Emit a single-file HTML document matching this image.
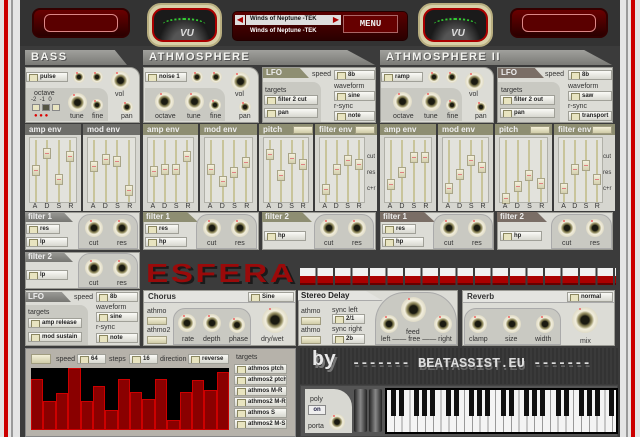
<!DOCTYPE html>
<html><head><meta charset="utf-8"><style>
*{margin:0;padding:0;box-sizing:border-box}
body{width:640px;height:437px;overflow:hidden;background:#3b3b3b;font-family:"Liberation Sans",sans-serif;font-size:7px;color:#333;position:relative}
.a{position:absolute}
.pan{position:absolute;background:#dcdcd6;border:1px solid #9a9a94}
.sub{position:absolute;background:#c9c9c2;border-radius:0 10px 0 0}
.hd{position:absolute;height:15px;background:linear-gradient(#a0a09c,#7a7a76);clip-path:polygon(0 0,88% 0,100% 100%,0 100%);color:#f4f4f0;font:bold 11px "Liberation Sans",sans-serif;letter-spacing:1.5px;padding:1px 6px;text-shadow:1px 1px 0 #555}
.k{position:absolute;border-radius:50%;background:radial-gradient(circle,#1a1a10 0 22%,#6a6440 30%,#9a9468 38%,#f2eedc 50%,#d8d4c0 78%,#9a9688 100%)}
.k::after{content:"";position:absolute;width:2px;height:2px;border-radius:50%;background:#e66;top:1px;left:28%}
.b{position:absolute;height:10px;background:linear-gradient(#fafaf6,#d8d8d0);border:1px solid #a0a098;font-weight:bold;font-size:6px;padding-left:13px;line-height:8px;color:#222;white-space:nowrap;overflow:hidden}
.b::before{content:"";position:absolute;left:2px;top:1px;width:7px;height:6px;background:#e8e4c0;border:1px solid #8a8660}
.l{position:absolute;font-size:7px;color:#333;white-space:nowrap}
.env{position:absolute;background:#d6d6d0;height:87px}
.eh{height:11px;background:#6e6e6a;color:#eee;font-size:8px;font-weight:bold;padding-left:4px;line-height:11px}
.o .eh{background:#8e8e72}
.eb{position:absolute;left:4px;right:4px;top:13px;height:66px;background:#e2e2dc;border:1px solid #b0b0a8;display:flex;justify-content:space-around}
.tr{width:2px;height:62px;margin-top:2px;background:#c8c49a;position:relative}
.tr i{position:absolute;left:-3px;width:8px;height:11px;background:linear-gradient(#f4f0dc,#d4d0b0);border:1px solid #a8a488}
.tr i::after{content:"";position:absolute;left:1px;right:1px;top:4px;height:1px;background:#e08080}
.ad{position:absolute;left:4px;right:4px;top:79px;display:flex;justify-content:space-around;font-size:7px;color:#333}
.fh{position:absolute;height:10px;background:linear-gradient(#9a9a96,#767672);clip-path:polygon(0 0,80% 0,100% 100%,0 100%);color:#eee;font-size:8px;font-weight:bold;padding-left:3px;line-height:10px}
.o.fh,.fh.o{background:#8e8e72}
.kp{position:absolute;background:#c9c9c2;border-radius:12px 12px 0 0;border:1px solid #aaa}
.tg{position:absolute;width:20px;height:8px;background:linear-gradient(#f4f0d8,#d0cca8);border:1px solid #a09c80}
.vu{position:absolute;border-radius:14px;background:#d8d0a8;border:2px solid #b8ae80;padding:3px}
.vu div{width:100%;height:100%;border-radius:11px;background:radial-gradient(ellipse at 50% 120%,#555 0 30%,#1a1a1a 60%);border:2px solid #a00;position:relative}
.red{position:absolute;background:linear-gradient(#6a0000,#2a0000);border-radius:8px;border:2px solid #300}
</style></head><body>
<div class="a" style="left:0;top:0;width:20px;height:437px;background:#e4e4e4"></div>
<div class="a" style="left:4px;top:0;width:4px;height:437px;background:#c00"></div>
<div class="a" style="left:11px;top:0;width:2px;height:437px;background:#999"></div>
<div class="a" style="left:620px;top:0;width:20px;height:437px;background:#e4e4e4"></div>
<div class="a" style="left:631px;top:0;width:4px;height:437px;background:#c00"></div>
<div class="a" style="left:626px;top:0;width:2px;height:437px;background:#999"></div>
<div class="a" style="left:20px;top:0;width:600px;height:46px;background:#333"></div>

<div class="red" style="left:32px;top:8px;width:98px;height:30px"><div class="a" style="left:10px;top:4px;width:74px;height:18px;border:1px solid #d88;border-radius:6px;background:#5a0000"></div></div>
<div class="red" style="left:510px;top:8px;width:98px;height:30px"><div class="a" style="left:10px;top:4px;width:74px;height:18px;border:1px solid #d88;border-radius:6px;background:#5a0000"></div></div>
<div class="vu" style="left:147px;top:3px;width:75px;height:44px"><div><span class="a" style="left:26px;top:18px;color:#ddd;font:italic bold 10px sans-serif">VU</span><span class="a" style="left:8px;top:8px;width:44px;height:14px;border-top:2px dotted #3c3;border-radius:50% 50% 0 0"></span></div></div>
<div class="vu" style="left:418px;top:3px;width:75px;height:44px"><div><span class="a" style="left:26px;top:18px;color:#ddd;font:italic bold 10px sans-serif">VU</span><span class="a" style="left:8px;top:8px;width:44px;height:14px;border-top:2px dotted #3c3;border-radius:50% 50% 0 0"></span></div></div>
<div class="a" style="left:232px;top:11px;width:176px;height:30px;background:linear-gradient(#5a0000,#2a0000);border-radius:5px;border:1px solid #200"></div>
<div class="a" style="left:235px;top:15px;width:10px;height:10px;background:#ddd;color:#a00;font-size:8px;line-height:10px;text-align:center">◀</div>
<div class="a" style="left:246px;top:15px;width:88px;height:10px;background:#ddd"></div>
<div class="a" style="left:331px;top:15px;width:10px;height:10px;background:#ddd;color:#a00;font-size:8px;line-height:10px;text-align:center">▶</div>
<div class="l" style="left:250px;top:16px;font-size:6px;font-weight:bold;color:#111">Winds of Neptune -TEK</div>
<div class="l" style="left:250px;top:28px;font-size:6px;font-weight:bold;color:#fff">Winds of Neptune -TEK</div>
<div class="a" style="left:343px;top:15px;width:55px;height:18px;background:#600;border:1px solid #a66;color:#eee;font:bold 9px 'Liberation Mono',monospace;text-align:center;line-height:16px">MENU</div>

<div class="hd" style="left:25px;top:50px;width:102px">BASS</div>
<div class="hd" style="left:143px;top:50px;width:232px">ATHMOSPHERE</div>
<div class="hd" style="left:380px;top:50px;width:232px">ATHMOSPHERE II</div>

<div class="pan" style="left:25px;top:67px;width:115px;height:56px;border-radius:0 10px 0 0"></div>
<div class="b" style="left:26px;top:72px;width:42px">pulse</div>
<div class="k" style="left:73px;top:71px;width:12px;height:12px"></div>
<div class="k" style="left:91px;top:71px;width:12px;height:12px"></div>
<div class="k" style="left:111px;top:71px;width:19px;height:19px"></div>
<div class="l" style="left:115px;top:91px">vol</div>
<div class="k" style="left:121px;top:101px;width:12px;height:12px"></div>
<div class="l" style="left:121px;top:113px">pan</div>
<div class="sub" style="left:26px;top:88px;width:82px;height:33px"></div>
<div class="l" style="left:34px;top:90px">octave</div>
<div class="l" style="left:31px;top:97px;font-size:6px">-2 &nbsp;-1 &nbsp;0</div>
<div class="a" style="left:32px;top:104px;width:8px;height:7px;background:#e8e4c0;border:1px solid #888"></div>
<div class="a" style="left:42px;top:104px;width:8px;height:7px;background:#554;border:1px solid #888"></div>
<div class="a" style="left:52px;top:104px;width:8px;height:7px;background:#e8e4c0;border:1px solid #888"></div>
<div class="l" style="left:34px;top:113px;color:#d00;font-size:6px">● ● ●</div>
<div class="k" style="left:68px;top:93px;width:19px;height:19px"></div>
<div class="l" style="left:70px;top:113px">tune</div>
<div class="k" style="left:91px;top:99px;width:12px;height:12px"></div>
<div class="l" style="left:92px;top:113px">fine</div>

<div class="pan" style="left:143px;top:67px;width:116px;height:56px;border-radius:0 10px 0 0"></div>
<div class="b" style="left:145px;top:72px;width:42px">noise 1</div>
<div class="k" style="left:191px;top:71px;width:12px;height:12px"></div>
<div class="k" style="left:210px;top:71px;width:12px;height:12px"></div>
<div class="k" style="left:231px;top:72px;width:19px;height:19px"></div>
<div class="l" style="left:235px;top:91px">vol</div>
<div class="k" style="left:239px;top:101px;width:12px;height:12px"></div>
<div class="l" style="left:239px;top:113px">pan</div>
<div class="sub" style="left:145px;top:88px;width:80px;height:33px"></div>
<div class="k" style="left:155px;top:92px;width:19px;height:19px"></div>
<div class="l" style="left:155px;top:113px">octave</div>
<div class="k" style="left:185px;top:92px;width:19px;height:19px"></div>
<div class="l" style="left:187px;top:113px">tune</div>
<div class="k" style="left:209px;top:99px;width:12px;height:12px"></div>
<div class="l" style="left:210px;top:113px">fine</div>

<div class="pan" style="left:262px;top:67px;width:114px;height:56px"></div>
<div class="fh o" style="left:263px;top:68px;width:46px">LFO</div>
<div class="l" style="left:312px;top:71px">speed</div>
<div class="b" style="left:334px;top:70px;width:41px">8b</div>
<div class="sub" style="left:263px;top:82px;width:58px;height:40px;border-radius:0 8px 0 0"></div>
<div class="l" style="left:265px;top:87px">targets</div>
<div class="b" style="left:264px;top:95px;width:54px">filter 2 cut</div>
<div class="b" style="left:264px;top:108px;width:54px">pan</div>
<div class="l" style="left:334px;top:83px">waveform</div>
<div class="b" style="left:334px;top:91px;width:41px">sine</div>
<div class="l" style="left:334px;top:103px">r-sync</div>
<div class="b" style="left:334px;top:111px;width:41px">note</div>

<div class="pan" style="left:380px;top:67px;width:114px;height:56px;border-radius:0 10px 0 0"></div>
<div class="b" style="left:381px;top:72px;width:42px">ramp</div>
<div class="k" style="left:428px;top:71px;width:12px;height:12px"></div>
<div class="k" style="left:446px;top:71px;width:12px;height:12px"></div>
<div class="k" style="left:465px;top:72px;width:19px;height:19px"></div>
<div class="l" style="left:469px;top:91px">vol</div>
<div class="k" style="left:475px;top:101px;width:12px;height:12px"></div>
<div class="l" style="left:475px;top:113px">pan</div>
<div class="sub" style="left:381px;top:88px;width:81px;height:33px"></div>
<div class="k" style="left:393px;top:92px;width:19px;height:19px"></div>
<div class="l" style="left:393px;top:113px">octave</div>
<div class="k" style="left:422px;top:92px;width:19px;height:19px"></div>
<div class="l" style="left:424px;top:113px">tune</div>
<div class="k" style="left:446px;top:99px;width:12px;height:12px"></div>
<div class="l" style="left:447px;top:113px">fine</div>

<div class="pan" style="left:497px;top:67px;width:116px;height:56px"></div>
<div class="fh" style="left:498px;top:68px;width:46px;background:#7a6e66">LFO</div>
<div class="l" style="left:545px;top:71px">speed</div>
<div class="b" style="left:568px;top:70px;width:44px">8b</div>
<div class="sub" style="left:498px;top:82px;width:62px;height:40px;border-radius:0 8px 0 0"></div>
<div class="l" style="left:501px;top:87px">targets</div>
<div class="b" style="left:500px;top:95px;width:55px">filter 2 out</div>
<div class="b" style="left:500px;top:108px;width:55px">pan</div>
<div class="l" style="left:568px;top:83px">waveform</div>
<div class="b" style="left:568px;top:91px;width:44px">saw</div>
<div class="l" style="left:568px;top:103px">r-sync</div>
<div class="b" style="left:568px;top:111px;width:44px">transport</div>

<div class="env" style="left:25px;top:124px;width:56px"><div class="eh">amp env</div><div class="eb"><div class="tr"><i style="top:25px"></i></div><div class="tr"><i style="top:8px"></i></div><div class="tr"><i style="top:34px"></i></div><div class="tr"><i style="top:11px"></i></div></div><div class="ad"><span>A</span><span>D</span><span>S</span><span>R</span></div></div>
<div class="env" style="left:83px;top:124px;width:57px"><div class="eh">mod env</div><div class="eb"><div class="tr"><i style="top:21px"></i></div><div class="tr"><i style="top:14px"></i></div><div class="tr"><i style="top:16px"></i></div><div class="tr"><i style="top:45px"></i></div></div><div class="ad"><span>A</span><span>D</span><span>S</span><span>R</span></div></div>

<div class="env o" style="left:143px;top:124px;width:55px"><div class="eh">amp env</div><div class="eb"><div class="tr"><i style="top:26px"></i></div><div class="tr"><i style="top:24px"></i></div><div class="tr"><i style="top:24px"></i></div><div class="tr"><i style="top:11px"></i></div></div><div class="ad"><span>A</span><span>D</span><span>S</span><span>R</span></div></div>
<div class="env o" style="left:200px;top:124px;width:57px"><div class="eh">mod env</div><div class="eb"><div class="tr"><i style="top:24px"></i></div><div class="tr"><i style="top:36px"></i></div><div class="tr"><i style="top:27px"></i></div><div class="tr"><i style="top:17px"></i></div></div><div class="ad"><span>A</span><span>D</span><span>S</span><span>R</span></div></div>
<div class="env o" style="left:259px;top:124px;width:54px"><div class="eh">pitch</div><div class="eb"><div class="tr"><i style="top:9px"></i></div><div class="tr"><i style="top:30px"></i></div><div class="tr"><i style="top:13px"></i></div><div class="tr"><i style="top:19px"></i></div></div><div class="ad"><span>A</span><span>D</span><span>S</span><span>R</span></div></div>
<div class="tg" style="left:293px;top:126px"></div>
<div class="env o" style="left:315px;top:124px;width:62px"><div class="eh">filter env</div><div class="eb" style="right:12px"><div class="tr"><i style="top:44px"></i></div><div class="tr"><i style="top:24px"></i></div><div class="tr"><i style="top:15px"></i></div><div class="tr"><i style="top:19px"></i></div></div><div class="ad" style="right:12px"><span>A</span><span>D</span><span>S</span><span>R</span></div></div>
<div class="tg" style="left:355px;top:126px"></div>
<div class="l" style="left:367px;top:153px;font-size:6px;line-height:8px">cut<br><br>res<br><br>c+r</div>

<div class="env o" style="left:380px;top:124px;width:56px"><div class="eh">amp env</div><div class="eb"><div class="tr"><i style="top:39px"></i></div><div class="tr"><i style="top:27px"></i></div><div class="tr"><i style="top:12px"></i></div><div class="tr"><i style="top:12px"></i></div></div><div class="ad"><span>A</span><span>D</span><span>S</span><span>R</span></div></div>
<div class="env o" style="left:438px;top:124px;width:55px"><div class="eh">mod env</div><div class="eb"><div class="tr"><i style="top:43px"></i></div><div class="tr"><i style="top:29px"></i></div><div class="tr"><i style="top:15px"></i></div><div class="tr"><i style="top:22px"></i></div></div><div class="ad"><span>A</span><span>D</span><span>S</span><span>R</span></div></div>
<div class="env o" style="left:495px;top:124px;width:57px"><div class="eh">pitch</div><div class="eb"><div class="tr"><i style="top:53px"></i></div><div class="tr"><i style="top:41px"></i></div><div class="tr"><i style="top:30px"></i></div><div class="tr"><i style="top:38px"></i></div></div><div class="ad"><span>A</span><span>D</span><span>S</span><span>R</span></div></div>
<div class="tg" style="left:530px;top:126px"></div>
<div class="env o" style="left:554px;top:124px;width:61px"><div class="eh">filter env</div><div class="eb" style="right:12px"><div class="tr"><i style="top:43px"></i></div><div class="tr"><i style="top:24px"></i></div><div class="tr"><i style="top:20px"></i></div><div class="tr"><i style="top:34px"></i></div></div><div class="ad" style="right:12px"><span>A</span><span>D</span><span>S</span><span>R</span></div></div>
<div class="tg" style="left:592px;top:126px"></div>
<div class="l" style="left:603px;top:153px;font-size:6px;line-height:8px">cut<br><br>res<br><br>c+r</div>

<div class="pan" style="left:25px;top:212px;width:115px;height:38px"></div>
<div class="fh" style="left:25px;top:212px;width:48px">filter 1</div>
<div class="b" style="left:26px;top:224px;width:34px">res</div>
<div class="b" style="left:26px;top:237px;width:42px">lp</div>
<div class="kp" style="left:78px;top:214px;width:60px;height:35px"></div>
<div class="k" style="left:85px;top:219px;width:18px;height:18px"></div><div class="k" style="left:113px;top:219px;width:18px;height:18px"></div>
<div class="l" style="left:89px;top:240px">cut</div><div class="l" style="left:117px;top:240px">res</div>

<div class="pan" style="left:25px;top:252px;width:115px;height:37px"></div>
<div class="fh" style="left:25px;top:252px;width:48px">filter 2</div>
<div class="b" style="left:26px;top:270px;width:42px">lp</div>
<div class="kp" style="left:78px;top:253px;width:60px;height:35px"></div>
<div class="k" style="left:85px;top:259px;width:18px;height:18px"></div><div class="k" style="left:113px;top:259px;width:18px;height:18px"></div>
<div class="l" style="left:89px;top:280px">cut</div><div class="l" style="left:117px;top:280px">res</div>

<div class="pan" style="left:143px;top:212px;width:116px;height:38px"></div>
<div class="fh o" style="left:143px;top:212px;width:55px">filter 1</div>
<div class="b" style="left:145px;top:224px;width:34px">res</div>
<div class="b" style="left:145px;top:237px;width:42px">hp</div>
<div class="kp" style="left:196px;top:214px;width:61px;height:35px"></div>
<div class="k" style="left:203px;top:219px;width:18px;height:18px"></div><div class="k" style="left:231px;top:219px;width:18px;height:18px"></div>
<div class="l" style="left:207px;top:240px">cut</div><div class="l" style="left:235px;top:240px">res</div>

<div class="pan" style="left:262px;top:212px;width:114px;height:38px"></div>
<div class="fh o" style="left:262px;top:212px;width:50px">filter 2</div>
<div class="b" style="left:264px;top:231px;width:42px">hp</div>
<div class="kp" style="left:314px;top:214px;width:60px;height:35px"></div>
<div class="k" style="left:320px;top:219px;width:18px;height:18px"></div><div class="k" style="left:348px;top:219px;width:18px;height:18px"></div>
<div class="l" style="left:324px;top:240px">cut</div><div class="l" style="left:352px;top:240px">res</div>

<div class="pan" style="left:380px;top:212px;width:114px;height:38px"></div>
<div class="fh" style="left:380px;top:212px;width:55px;background:#7a6e66">filter 1</div>
<div class="b" style="left:382px;top:224px;width:34px">res</div>
<div class="b" style="left:382px;top:237px;width:42px">hp</div>
<div class="kp" style="left:433px;top:214px;width:60px;height:35px"></div>
<div class="k" style="left:440px;top:219px;width:18px;height:18px"></div><div class="k" style="left:468px;top:219px;width:18px;height:18px"></div>
<div class="l" style="left:444px;top:240px">cut</div><div class="l" style="left:472px;top:240px">res</div>

<div class="pan" style="left:497px;top:212px;width:116px;height:38px"></div>
<div class="fh" style="left:497px;top:212px;width:50px;background:#7a6e66">filter 2</div>
<div class="b" style="left:500px;top:231px;width:42px">hp</div>
<div class="kp" style="left:551px;top:214px;width:61px;height:35px"></div>
<div class="k" style="left:558px;top:219px;width:18px;height:18px"></div><div class="k" style="left:586px;top:219px;width:18px;height:18px"></div>
<div class="l" style="left:562px;top:240px">cut</div><div class="l" style="left:590px;top:240px">res</div>

<div class="a" style="left:146px;top:259px;font:bold 26px 'Liberation Sans',sans-serif;letter-spacing:2px;color:#9a0a0a;text-shadow:2px 2px 0 #1a1a1a;line-height:28px;white-space:nowrap;transform:scaleX(1.28);transform-origin:left">ESFERA</div>
<div class="a" style="left:300px;top:268px;width:316px;height:17px;background:repeating-linear-gradient(90deg,transparent 0 15.5px,#3b3b3b 15.5px 17.5px),linear-gradient(#f0f0f0 0 8px,#a00 8px 15px,#600 15px)"></div>

<div class="pan" style="left:25px;top:290px;width:115px;height:56px"></div>
<div class="fh" style="left:25px;top:292px;width:46px">LFO</div>
<div class="l" style="left:74px;top:294px">speed</div>
<div class="b" style="left:96px;top:292px;width:42px">8b</div>
<div class="sub" style="left:26px;top:305px;width:62px;height:40px;border-radius:0 8px 0 0"></div>
<div class="l" style="left:28px;top:309px">targets</div>
<div class="b" style="left:28px;top:318px;width:54px">amp release</div>
<div class="b" style="left:28px;top:332px;width:54px">mod sustain</div>
<div class="l" style="left:96px;top:304px">waveform</div>
<div class="b" style="left:96px;top:312px;width:42px">sine</div>
<div class="l" style="left:96px;top:324px">r-sync</div>
<div class="b" style="left:96px;top:333px;width:42px">note</div>

<div class="pan" style="left:143px;top:290px;width:153px;height:56px"></div>
<div class="a" style="left:144px;top:291px;width:151px;height:12px;background:#e4e4e0;border-bottom:1px solid #aaa;font-size:8px;font-weight:bold;padding-left:4px;line-height:12px">Chorus</div>
<div class="b" style="left:248px;top:292px;width:46px">Sine</div>
<div class="l" style="left:147px;top:308px">athmo</div>
<div class="tg" style="left:147px;top:317px"></div>
<div class="l" style="left:147px;top:327px">athmo2</div>
<div class="tg" style="left:147px;top:336px"></div>
<div class="kp" style="left:173px;top:308px;width:78px;height:37px"></div>
<div class="k" style="left:178px;top:314px;width:18px;height:18px"></div>
<div class="k" style="left:203px;top:314px;width:18px;height:18px"></div>
<div class="k" style="left:229px;top:317px;width:16px;height:16px"></div>
<div class="l" style="left:182px;top:336px">rate</div><div class="l" style="left:203px;top:336px">depth</div><div class="l" style="left:229px;top:336px">phase</div>
<div class="k" style="left:262px;top:307px;width:26px;height:26px"></div>
<div class="l" style="left:261px;top:336px">dry/wet</div>

<div class="pan" style="left:298px;top:290px;width:160px;height:56px"></div>
<div class="fh" style="left:298px;top:291px;width:85px;background:#e4e4e0;color:#222;border-bottom:1px solid #aaa">Stereo Delay</div>
<div class="l" style="left:301px;top:308px">athmo</div>
<div class="tg" style="left:301px;top:317px"></div>
<div class="l" style="left:301px;top:327px">athmo</div>
<div class="tg" style="left:301px;top:336px"></div>
<div class="l" style="left:332px;top:307px">sync left</div>
<div class="b" style="left:332px;top:314px;width:33px">2/1</div>
<div class="l" style="left:332px;top:326px">sync right</div>
<div class="b" style="left:332px;top:334px;width:33px">2b</div>
<div class="kp" style="left:375px;top:292px;width:82px;height:53px;border-radius:30px 30px 0 0"></div>
<div class="k" style="left:380px;top:315px;width:18px;height:18px"></div>
<div class="k" style="left:401px;top:297px;width:25px;height:25px"></div>
<div class="k" style="left:434px;top:315px;width:18px;height:18px"></div>
<div class="l" style="left:406px;top:329px">feed</div>
<div class="l" style="left:381px;top:336px">left —— free —— right</div>

<div class="pan" style="left:462px;top:290px;width:153px;height:56px"></div>
<div class="a" style="left:463px;top:291px;width:151px;height:12px;background:#e4e4e0;border-bottom:1px solid #aaa;font-size:8px;font-weight:bold;padding-left:4px;line-height:12px">Reverb</div>
<div class="b" style="left:567px;top:292px;width:46px">normal</div>
<div class="kp" style="left:464px;top:308px;width:97px;height:37px"></div>
<div class="k" style="left:469px;top:315px;width:18px;height:18px"></div>
<div class="k" style="left:503px;top:315px;width:18px;height:18px"></div>
<div class="k" style="left:536px;top:315px;width:18px;height:18px"></div>
<div class="l" style="left:469px;top:336px">clamp</div><div class="l" style="left:505px;top:336px">size</div><div class="l" style="left:535px;top:336px">width</div>
<div class="k" style="left:572px;top:307px;width:26px;height:26px"></div>
<div class="l" style="left:580px;top:338px">mix</div>

<div class="a" style="left:25px;top:348px;width:271px;height:89px;background:#b6b2aa;border:1px solid #888"></div>
<div class="tg" style="left:31px;top:354px;height:10px"></div>
<div class="l" style="left:56px;top:356px">speed</div>
<div class="b" style="left:77px;top:354px;width:29px">64</div>
<div class="l" style="left:109px;top:356px">steps</div>
<div class="b" style="left:129px;top:354px;width:29px">16</div>
<div class="l" style="left:160px;top:356px">direction</div>
<div class="b" style="left:188px;top:354px;width:41px">reverse</div>
<div class="a" style="left:31px;top:368px;width:198px;height:62px;background:#000;display:flex;align-items:flex-end">
<div style="flex:1;height:51px;background:#8a0000;border:1px solid #c00"></div>
<div style="flex:1;height:29px;background:#8a0000;border:1px solid #c00"></div>
<div style="flex:1;height:37px;background:#8a0000;border:1px solid #c00"></div>
<div style="flex:1;height:62px;background:#8a0000;border:1px solid #c00"></div>
<div style="flex:1;height:29px;background:#8a0000;border:1px solid #c00"></div>
<div style="flex:1;height:44px;background:#8a0000;border:1px solid #c00"></div>
<div style="flex:1;height:20px;background:#8a0000;border:1px solid #c00"></div>
<div style="flex:1;height:51px;background:#8a0000;border:1px solid #c00"></div>
<div style="flex:1;height:38px;background:#8a0000;border:1px solid #c00"></div>
<div style="flex:1;height:31px;background:#8a0000;border:1px solid #c00"></div>
<div style="flex:1;height:51px;background:#8a0000;border:1px solid #c00"></div>
<div style="flex:1;height:10px;background:#8a0000;border:1px solid #c00"></div>
<div style="flex:1;height:38px;background:#8a0000;border:1px solid #c00"></div>
<div style="flex:1;height:50px;background:#8a0000;border:1px solid #c00"></div>
<div style="flex:1;height:40px;background:#8a0000;border:1px solid #c00"></div>
<div style="flex:1;height:58px;background:#8a0000;border:1px solid #c00"></div>
</div>
<div class="l" style="left:236px;top:354px">targets</div>
<div class="b" style="left:234px;top:364px;width:53px">athmos ptch</div>
<div class="b" style="left:234px;top:375px;width:53px">athmos2 ptch</div>
<div class="b" style="left:234px;top:386px;width:53px">athmos M-R</div>
<div class="b" style="left:234px;top:397px;width:53px">athmos2 M-R</div>
<div class="b" style="left:234px;top:408px;width:53px">athmos S</div>
<div class="b" style="left:234px;top:419px;width:53px">athmos2 M-S</div>

<div class="a" style="left:300px;top:348px;width:318px;height:36px;background:repeating-linear-gradient(90deg,#333 0 2px,#3a3a3a 2px 4px)"></div>
<div class="a" style="left:312px;top:349px;font:bold 20px 'Liberation Mono',monospace;color:#e8e8e8;text-shadow:2px 3px 0 #777">by</div>
<div class="a" style="left:352px;top:356px;font:bold 14px 'Liberation Mono',monospace;color:#ddd;text-shadow:1px 3px 0 #666;white-space:nowrap;transform:scaleX(0.98);transform-origin:left">------- BEATASSIST.EU -------</div>
<div class="a" style="left:300px;top:385px;width:318px;height:52px;background:#555;border:1px solid #444"></div>
<div class="a" style="left:305px;top:389px;width:47px;height:44px;background:#d8d8d2;border-radius:0 18px 0 0"></div>
<div class="l" style="left:310px;top:396px">poly</div>
<div class="a" style="left:308px;top:405px;width:18px;height:10px;background:#eee;border:1px solid #888;font-size:6px;text-align:center;line-height:8px;font-weight:bold;color:#224">on</div>
<div class="l" style="left:308px;top:423px">porta</div>
<div class="k" style="left:329px;top:414px;width:16px;height:16px"></div>
<div class="a" style="left:354px;top:389px;width:13px;height:43px;background:linear-gradient(90deg,#222,#888,#222);border-radius:2px"></div>
<div class="a" style="left:369px;top:389px;width:13px;height:43px;background:linear-gradient(90deg,#222,#888,#222);border-radius:2px"></div>
<div class="a" style="left:385px;top:388px;width:233px;height:46px;background:#000;padding:2px">
<div style="width:100%;height:100%;background:repeating-linear-gradient(90deg,#f4f4f4 0 6.8px,#999 6.8px 7.8px)"></div>
</div>
<svg class="a" style="left:387px;top:390px" width="229" height="26">
<g fill="#111">
<rect x="4" y="0" width="5" height="26"/><rect x="12" y="0" width="5" height="26"/>
<rect x="27" y="0" width="5" height="26"/><rect x="35" y="0" width="5" height="26"/><rect x="43" y="0" width="5" height="26"/>
<rect x="59" y="0" width="5" height="26"/><rect x="67" y="0" width="5" height="26"/>
<rect x="82" y="0" width="5" height="26"/><rect x="90" y="0" width="5" height="26"/><rect x="98" y="0" width="5" height="26"/>
<rect x="114" y="0" width="5" height="26"/><rect x="122" y="0" width="5" height="26"/>
<rect x="137" y="0" width="5" height="26"/><rect x="145" y="0" width="5" height="26"/><rect x="153" y="0" width="5" height="26"/>
<rect x="169" y="0" width="5" height="26"/><rect x="177" y="0" width="5" height="26"/>
<rect x="192" y="0" width="5" height="26"/><rect x="200" y="0" width="5" height="26"/><rect x="208" y="0" width="5" height="26"/>
<rect x="222" y="0" width="5" height="26"/>
</g></svg>
</body></html>
